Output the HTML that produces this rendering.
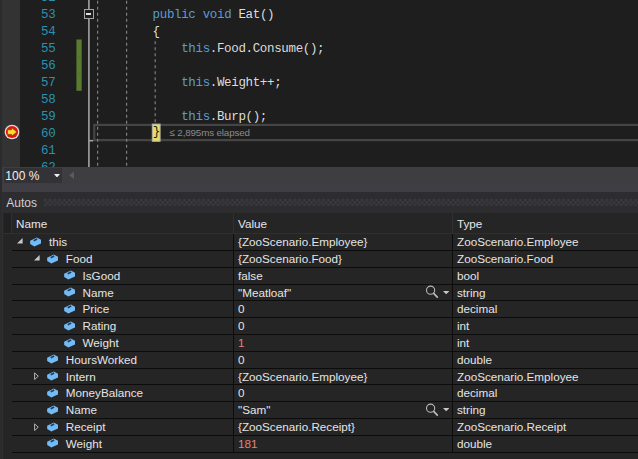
<!DOCTYPE html>
<html><head><meta charset="utf-8"><title>Autos</title>
<style>
html,body{margin:0;padding:0;}
body{width:638px;height:459px;overflow:hidden;background:#1e1e1e;position:relative;font-family:"Liberation Sans",sans-serif;}
div,span,svg{position:absolute;}
#editor{left:0;top:0;width:638px;height:166.5px;background:#1e1e1e;overflow:hidden;}
#strip{left:0;top:0;width:2px;height:459px;background:#2b2b2d;}
#margin{left:2px;top:0;width:18px;height:166.5px;background:#333333;}
.ln{left:20px;width:35.4px;height:17px;line-height:17px;text-align:right;color:#2b91af;font-family:"Liberation Mono",monospace;font-size:12.5px;letter-spacing:-0.35px;white-space:pre;}
.code{left:152.6px;height:17px;line-height:17px;color:#dcdcdc;font-family:"Liberation Mono",monospace;font-size:12.5px;letter-spacing:-0.35px;white-space:pre;}
.k{position:static;color:#569cd6;}
#box{left:84px;top:8.6px;width:8px;height:8.5px;border:1px solid #a5a5a5;background:#1e1e1e;}
#minus{left:86.4px;top:13.4px;width:5px;height:1.6px;background:#e0e0e0;}
#hlb{left:152.8px;top:124.4px;height:17px;line-height:17px;color:#1e1e1e;font-family:"Liberation Mono",monospace;font-size:12.5px;}
#elapsed{left:169.5px;top:125px;height:15px;line-height:15px;font-size:9.8px;letter-spacing:-0.14px;color:#8c8c8c;white-space:pre;}
#bp{left:3.8px;top:124.2px;}
#sbrow{left:0;top:166.5px;width:638px;height:17px;background:#3e3e42;}
#combo{left:4px;top:168px;width:58px;height:15px;background:#333337;}
#combot{left:5.3px;top:169px;height:15px;line-height:15px;font-size:12px;color:#f1f1f1;white-space:pre;}
#band{left:0;top:183.5px;width:638px;height:8px;background:#3e3e44;}
#title{left:3px;top:191.5px;width:635px;height:21.5px;background:#2d2d30;}
#titlet{left:6.3px;top:194.7px;height:16px;line-height:16px;font-size:12px;color:#d0d0d0;}
#grip{left:44px;top:199px;width:594px;height:6.5px;}
#panel{left:3px;top:213px;width:635px;height:246px;background:#252526;}
#lstrip{left:0;top:191.5px;width:3px;height:268px;background:#303033;}
#hdrg{left:4px;top:213px;width:7px;height:19.5px;background:#212122;}
#hdr{left:11px;top:213px;width:627px;height:19.5px;background:#252526;}
#hdrline{left:3px;top:232.5px;width:635px;height:1px;background:#2f2f31;}
.hs{top:213px;width:1px;height:19.5px;background:#303032;}
.ht{top:215.7px;height:16px;line-height:16px;font-size:11.7px;color:#e6e6e6;}
.row{left:0;width:638px;height:16.8px;}
.t{top:0.5px;height:15px;line-height:15px;font-size:11.7px;color:#e4e4e4;white-space:pre;}
.red{color:#e0837a;}
.sep{left:12px;width:626px;height:1px;background:#0c0c0c;}
.vs{top:233.5px;width:1px;height:218.5px;background:#0c0c0c;}
.cube{top:3.1px;}
.mag{left:425px;top:0px;}
.dd{left:442.9px;top:6.5px;}
</style></head><body>
<div id="editor">
<div id="margin"></div>
<div class="ln" style="top:-10.0px">52</div>
<div class="ln" style="top:7.0px">53</div>
<div class="code" style="top:7.0px"><span class="k">public</span> <span class="k">void</span> Eat()</div>
<div class="ln" style="top:24.0px">54</div>
<div class="code" style="top:24.0px">{</div>
<div class="ln" style="top:41.0px">55</div>
<div class="code" style="top:41.0px">    <span class="k">this</span>.Food.Consume();</div>
<div class="ln" style="top:58.0px">56</div>
<div class="ln" style="top:75.0px">57</div>
<div class="code" style="top:75.0px">    <span class="k">this</span>.Weight++;</div>
<div class="ln" style="top:92.0px">58</div>
<div class="ln" style="top:109.0px">59</div>
<div class="code" style="top:109.0px">    <span class="k">this</span>.Burp();</div>
<div class="ln" style="top:126.0px">60</div>
<div class="ln" style="top:143.0px">61</div>
<div class="ln" style="top:160.0px">62</div>
<svg style="left:0;top:0" width="638" height="167" viewBox="0 0 638 167"><rect x="76.4" y="39.5" width="5.3" height="51.3" fill="#5a7a30"/><rect x="76.4" y="56.9" width="5.3" height="0.6" fill="#4f6c2a"/><rect x="76.4" y="73.3" width="5.3" height="0.6" fill="#4f6c2a"/><rect x="94.25" y="124.9" width="560" height="15.2" fill="none" stroke="#454545" stroke-width="2.2"/><line x1="88.9" y1="0" x2="88.9" y2="167" stroke="#989898" stroke-width="1.75"/><path d="M88.9 140.7 H93.2" stroke="#a0a0a0" stroke-width="1.6"/><g stroke="#7e7e7e" stroke-width="1.2" stroke-dasharray="3 3" fill="none"><line x1="97.6" y1="0.7" x2="97.6" y2="166.5"/><line x1="126.6" y1="0.7" x2="126.6" y2="166.5"/><line x1="155.2" y1="41.2" x2="155.2" y2="124"/></g><rect x="152.3" y="124.1" width="7.8" height="17.2" fill="#e4de69" stroke="#b2b2a2" stroke-width="1"/></svg>
<div id="box"></div><div id="minus"></div>
<div id="hlb">}</div>
<div id="elapsed">≤ 2,895ms elapsed</div>
<svg id="bp" width="16" height="16" viewBox="0 0 16 16"><circle cx="8" cy="8" r="7.35" fill="#e6dcdc"/><circle cx="8" cy="8" r="6.1" fill="#e41212"/><path d="M3.4 5.8 L7.6 5.8 L7.6 3.6 L12.9 7.95 L7.6 12.2 L7.6 10.4 L3.4 10.4 Z" fill="#ffdd2e" stroke="#6e4a00" stroke-width="0.7" stroke-linejoin="round"/></svg>
</div>
<div id="sbrow"></div>
<div id="combo"></div><div id="combot">100 %</div>
<svg style="left:54px;top:173.8px" width="6" height="3.5" viewBox="0 0 6 3.5"><path d="M0 0 L6 0 L3 3.5 Z" fill="#f1f1f1"/></svg>
<svg style="left:68.5px;top:171px" width="5.6" height="8.6" viewBox="0 0 5 8"><path d="M5 0 L5 8 L0 4 Z" fill="#5a5a5e"/></svg>
<div id="band"></div>
<div id="lstrip"></div>
<div id="title"></div>
<div id="titlet">Autos</div>
<svg id="grip" width="594" height="7"><defs><pattern id="gp" width="4.8" height="4.8" patternUnits="userSpaceOnUse"><rect x="0" y="0" width="2.4" height="2.4" fill="#3b3b3f"/><rect x="2.4" y="2.4" width="2.4" height="2.4" fill="#3b3b3f"/></pattern></defs><rect width="594" height="7" fill="url(#gp)"/></svg>
<div id="panel"></div>
<div id="hdrg"></div><div id="hdr"></div><div id="hdrline"></div>
<div class="hs" style="left:11px"></div><div class="hs" style="left:233px"></div><div class="hs" style="left:452px"></div>
<div class="ht" style="left:16px">Name</div><div class="ht" style="left:238px">Value</div><div class="ht" style="left:457px">Type</div>
<div class="row" style="top:233.7px"><svg class="exp" style="left:17.3px;top:4.8px" width="5.6" height="5.6" viewBox="0 0 6 6"><path d="M6 0 L6 6 L0 6 Z" fill="#c8c8c8"/></svg><svg class="cube" style="left:30.0px" width="12" height="10" viewBox="0 0 12 10"><path d="M0.1 3.7 L6.8 0.4 L11 2.7 L11 6.5 L4.3 9.4 L0.2 7.1 Z" fill="#72bbf6"/><path d="M3.7 3.7 L7.2 2.1" stroke="#1f3c58" stroke-width="1.6" fill="none"/></svg><span class="t" style="left:49.0px">this</span><span class="t" style="left:238px">{ZooScenario.Employee}</span><span class="t" style="left:457px">ZooScenario.Employee</span></div><div class="sep" style="top:250px"></div>
<div class="row" style="top:250.5px"><svg class="exp" style="left:34.0px;top:4.8px" width="5.6" height="5.6" viewBox="0 0 6 6"><path d="M6 0 L6 6 L0 6 Z" fill="#c8c8c8"/></svg><svg class="cube" style="left:46.8px" width="12" height="10" viewBox="0 0 12 10"><path d="M0.1 3.7 L6.8 0.4 L11 2.7 L11 6.5 L4.3 9.4 L0.2 7.1 Z" fill="#72bbf6"/><path d="M3.7 3.7 L7.2 2.1" stroke="#1f3c58" stroke-width="1.6" fill="none"/></svg><span class="t" style="left:65.8px">Food</span><span class="t" style="left:238px">{ZooScenario.Food}</span><span class="t" style="left:457px">ZooScenario.Food</span></div><div class="sep" style="top:267px"></div>
<div class="row" style="top:267.3px"><svg class="cube" style="left:63.5px" width="12" height="10" viewBox="0 0 12 10"><path d="M0.1 3.7 L6.8 0.4 L11 2.7 L11 6.5 L4.3 9.4 L0.2 7.1 Z" fill="#72bbf6"/><path d="M3.7 3.7 L7.2 2.1" stroke="#1f3c58" stroke-width="1.6" fill="none"/></svg><span class="t" style="left:82.5px">IsGood</span><span class="t" style="left:238px">false</span><span class="t" style="left:457px">bool</span></div><div class="sep" style="top:284px"></div>
<div class="row" style="top:284.1px"><svg class="cube" style="left:63.5px" width="12" height="10" viewBox="0 0 12 10"><path d="M0.1 3.7 L6.8 0.4 L11 2.7 L11 6.5 L4.3 9.4 L0.2 7.1 Z" fill="#72bbf6"/><path d="M3.7 3.7 L7.2 2.1" stroke="#1f3c58" stroke-width="1.6" fill="none"/></svg><span class="t" style="left:82.5px">Name</span><span class="t" style="left:238px">&quot;Meatloaf&quot;</span><svg class="mag" width="14" height="15" viewBox="0 0 14 15"><circle cx="5.6" cy="6.2" r="4.1" fill="none" stroke="#b8b8b8" stroke-width="1.1"/><path d="M8.7 9.3 L12.3 13.1" stroke="#b8b8b8" stroke-width="1.7" stroke-linecap="round"/></svg><svg class="dd" width="6.3" height="3.4" viewBox="0 0 6 3"><path d="M0 0 L6 0 L3 3 Z" fill="#c8c8c8"/></svg><span class="t" style="left:457px">string</span></div><div class="sep" style="top:300px"></div>
<div class="row" style="top:300.9px"><svg class="cube" style="left:63.5px" width="12" height="10" viewBox="0 0 12 10"><path d="M0.1 3.7 L6.8 0.4 L11 2.7 L11 6.5 L4.3 9.4 L0.2 7.1 Z" fill="#72bbf6"/><path d="M3.7 3.7 L7.2 2.1" stroke="#1f3c58" stroke-width="1.6" fill="none"/></svg><span class="t" style="left:82.5px">Price</span><span class="t" style="left:238px">0</span><span class="t" style="left:457px">decimal</span></div><div class="sep" style="top:317px"></div>
<div class="row" style="top:317.7px"><svg class="cube" style="left:63.5px" width="12" height="10" viewBox="0 0 12 10"><path d="M0.1 3.7 L6.8 0.4 L11 2.7 L11 6.5 L4.3 9.4 L0.2 7.1 Z" fill="#72bbf6"/><path d="M3.7 3.7 L7.2 2.1" stroke="#1f3c58" stroke-width="1.6" fill="none"/></svg><span class="t" style="left:82.5px">Rating</span><span class="t" style="left:238px">0</span><span class="t" style="left:457px">int</span></div><div class="sep" style="top:334px"></div>
<div class="row" style="top:334.5px"><svg class="cube" style="left:63.5px" width="12" height="10" viewBox="0 0 12 10"><path d="M0.1 3.7 L6.8 0.4 L11 2.7 L11 6.5 L4.3 9.4 L0.2 7.1 Z" fill="#72bbf6"/><path d="M3.7 3.7 L7.2 2.1" stroke="#1f3c58" stroke-width="1.6" fill="none"/></svg><span class="t" style="left:82.5px">Weight</span><span class="t red" style="left:238px">1</span><span class="t" style="left:457px">int</span></div><div class="sep" style="top:351px"></div>
<div class="row" style="top:351.3px"><svg class="cube" style="left:46.8px" width="12" height="10" viewBox="0 0 12 10"><path d="M0.1 3.7 L6.8 0.4 L11 2.7 L11 6.5 L4.3 9.4 L0.2 7.1 Z" fill="#72bbf6"/><path d="M3.7 3.7 L7.2 2.1" stroke="#1f3c58" stroke-width="1.6" fill="none"/></svg><span class="t" style="left:65.8px">HoursWorked</span><span class="t" style="left:238px">0</span><span class="t" style="left:457px">double</span></div><div class="sep" style="top:368px"></div>
<div class="row" style="top:368.1px"><svg class="exp" style="left:34.0px;top:4px" width="5" height="8.4" viewBox="0 0 5 8.4"><path d="M0.6 0.9 L4.3 4.2 L0.6 7.5 Z" fill="none" stroke="#b4b4b4" stroke-width="1"/></svg><svg class="cube" style="left:46.8px" width="12" height="10" viewBox="0 0 12 10"><path d="M0.1 3.7 L6.8 0.4 L11 2.7 L11 6.5 L4.3 9.4 L0.2 7.1 Z" fill="#72bbf6"/><path d="M3.7 3.7 L7.2 2.1" stroke="#1f3c58" stroke-width="1.6" fill="none"/></svg><span class="t" style="left:65.8px">Intern</span><span class="t" style="left:238px">{ZooScenario.Employee}</span><span class="t" style="left:457px">ZooScenario.Employee</span></div><div class="sep" style="top:384px"></div>
<div class="row" style="top:384.9px"><svg class="cube" style="left:46.8px" width="12" height="10" viewBox="0 0 12 10"><path d="M0.1 3.7 L6.8 0.4 L11 2.7 L11 6.5 L4.3 9.4 L0.2 7.1 Z" fill="#72bbf6"/><path d="M3.7 3.7 L7.2 2.1" stroke="#1f3c58" stroke-width="1.6" fill="none"/></svg><span class="t" style="left:65.8px">MoneyBalance</span><span class="t" style="left:238px">0</span><span class="t" style="left:457px">decimal</span></div><div class="sep" style="top:401px"></div>
<div class="row" style="top:401.7px"><svg class="cube" style="left:46.8px" width="12" height="10" viewBox="0 0 12 10"><path d="M0.1 3.7 L6.8 0.4 L11 2.7 L11 6.5 L4.3 9.4 L0.2 7.1 Z" fill="#72bbf6"/><path d="M3.7 3.7 L7.2 2.1" stroke="#1f3c58" stroke-width="1.6" fill="none"/></svg><span class="t" style="left:65.8px">Name</span><span class="t" style="left:238px">&quot;Sam&quot;</span><svg class="mag" width="14" height="15" viewBox="0 0 14 15"><circle cx="5.6" cy="6.2" r="4.1" fill="none" stroke="#b8b8b8" stroke-width="1.1"/><path d="M8.7 9.3 L12.3 13.1" stroke="#b8b8b8" stroke-width="1.7" stroke-linecap="round"/></svg><svg class="dd" width="6.3" height="3.4" viewBox="0 0 6 3"><path d="M0 0 L6 0 L3 3 Z" fill="#c8c8c8"/></svg><span class="t" style="left:457px">string</span></div><div class="sep" style="top:418px"></div>
<div class="row" style="top:418.5px"><svg class="exp" style="left:34.0px;top:4px" width="5" height="8.4" viewBox="0 0 5 8.4"><path d="M0.6 0.9 L4.3 4.2 L0.6 7.5 Z" fill="none" stroke="#b4b4b4" stroke-width="1"/></svg><svg class="cube" style="left:46.8px" width="12" height="10" viewBox="0 0 12 10"><path d="M0.1 3.7 L6.8 0.4 L11 2.7 L11 6.5 L4.3 9.4 L0.2 7.1 Z" fill="#72bbf6"/><path d="M3.7 3.7 L7.2 2.1" stroke="#1f3c58" stroke-width="1.6" fill="none"/></svg><span class="t" style="left:65.8px">Receipt</span><span class="t" style="left:238px">{ZooScenario.Receipt}</span><span class="t" style="left:457px">ZooScenario.Receipt</span></div><div class="sep" style="top:435px"></div>
<div class="row" style="top:435.3px"><svg class="cube" style="left:46.8px" width="12" height="10" viewBox="0 0 12 10"><path d="M0.1 3.7 L6.8 0.4 L11 2.7 L11 6.5 L4.3 9.4 L0.2 7.1 Z" fill="#72bbf6"/><path d="M3.7 3.7 L7.2 2.1" stroke="#1f3c58" stroke-width="1.6" fill="none"/></svg><span class="t" style="left:65.8px">Weight</span><span class="t red" style="left:238px">181</span><span class="t" style="left:457px">double</span></div><div class="sep" style="top:452px"></div>
<div class="vs" style="left:233px"></div><div class="vs" style="left:452px"></div>
<div id="strip"></div>
</body></html>
